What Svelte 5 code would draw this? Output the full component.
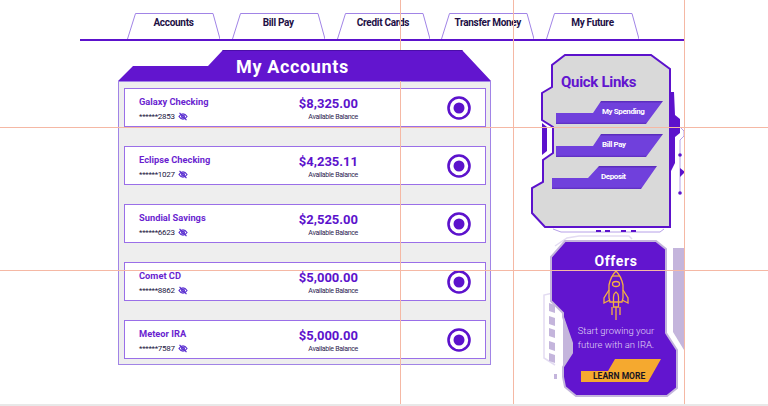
<script>
  const tabs = ['Accounts', 'Bill Pay', 'Credit Cards', 'Transfer Money', 'My Future'];
  const accounts = [
    { name: 'Galaxy Checking', mask: '******2853', amount: '$8,325.00' },
    { name: 'Eclipse Checking', mask: '******1027', amount: '$4,235.11' },
    { name: 'Sundial Savings', mask: '******6623', amount: '$2,525.00' },
    { name: 'Comet CD', mask: '******8862', amount: '$5,000.00' },
    { name: 'Meteor IRA', mask: '******7587', amount: '$5,000.00' }
  ];
  const links = ['My Spending', 'Bill Pay', 'Deposit'];
  const guidesX = [400, 513, 684];
  const guidesY = [127, 270];
</script>

<div class="page">
  <nav class="nav">
    {#each tabs as tab}
      <a class="tab" href="#top">
        <svg class="tab-shape" viewBox="0 0 93 26" aria-hidden="true">
          <path d="M.5 26 8.500.5h77.500L93 26" />
        </svg>
        <span>{tab}</span>
      </a>
    {/each}
  </nav>

  <div class="content">
    <section class="accounts">
      <h1 class="banner">My Accounts</h1>
      <ul class="list">
        {#each accounts as a}
          <li class="row">
            <div class="who">
              <div class="name">{a.name}</div>
              <div class="mask">
                {a.mask}
                <svg class="eye" viewBox="0 0 10 9" aria-hidden="true">
                  <path d="M1 4.500C2.200 2.600 3.500 1.800 5 1.800s2.800.8 4 2.700C7.800 6.400 6.500 7.200 5 7.200S2.200 6.400 1 4.500Z" />
                  <circle cx="5" cy="4.500" r="1.400" />
                  <path d="M1.500.8 8.500 8.200" />
                </svg>
              </div>
            </div>
            <div class="money">
              <div class="amount">{a.amount}</div>
              <div class="avail">Available Balance</div>
            </div>
            <svg class="radio" viewBox="0 0 24 24" aria-hidden="true">
              <circle class="ring" cx="12" cy="12" r="10.500" />
              <circle class="dot" cx="12" cy="12" r="5.500" />
            </svg>
          </li>
        {/each}
      </ul>
    </section>

    <aside class="side">
      <div class="quick">
        <svg class="card-art" viewBox="530 52 156 180" aria-hidden="true">
          <path class="thin" d="M680 127l4 4v5l-4 4v52" />
          <circle class="solid" cx="680" cy="155" r="1.800" />
          <circle class="solid" cx="680" cy="193" r="1.800" />
          <path class="solid" d="M680 168l5 4-5 5z" />
          <path class="solid" d="M670 92h4l1 23 5 4v14l-5 4v26l-4 8h-1z" />
          <path class="quick-body" d="M565 55h86l19 14v158H545l-13-14v-25l11-6v-22l10-7v-26l-11-7V93l10-6V65z" />
          <path class="solid" d="M542 123l5 4v24l-5 4z" />
          <path class="thin" d="M553 229l8 3h99l4-3" />
          <path class="solid" d="M596 230h5v2h-5zM605 230h5v2h-5zM621 230h5v2h-5zM631 230h5v2h-5z" />
        </svg>
        <h2 class="quick-title">Quick Links</h2>
        <div class="links">
          {#each links as link}
            <a class="link" href="#top">{link}</a>
          {/each}
        </div>
      </div>

      <div class="offers">
        <svg class="card-art" viewBox="530 232 156 173" aria-hidden="true">
          <path class="pale" d="M673 248h11v102l-11-18z" />
          <path class="faint" d="M553 293l-9 2v63l11 7" />
          <path class="faint" d="M555 246l12-8 12-2h50l3 3" />
          <path class="pale" d="M549 303l6 2v8l-6-2zM549 316l6 2v8l-6-2zM549 328l6 2v8l-6-2zM549 341l6 2v8l-6-2zM549 353l6 2v8l-6-2zM554 374h3v5h-3z" />
          <path class="offer-body" d="M565 241h91l10 8v84l11 17v38l-10 8h-91l-11-9-2-10v-10l9-14v-10l-9-26v-4l-12-12v-44z" />
          <path class="pale" d="M563 315l9 28v10l-9 14z" />
        </svg>
        <h2 class="offer-title">Offers</h2>
        <svg class="rocket" viewBox="600 268 32 54" aria-hidden="true">
          <path d="M616 271c4 4 6 9 7 14v13l-1 4h-12l-1-4v-13c1-5 3-10 7-14z" />
          <path d="M612 276h8" />
          <ellipse cx="616" cy="284" rx="3.500" ry="2.500" />
          <path d="M609 290l-5 8v5l6-3M623 290l5 8v5l-6-3" />
          <path d="M613.500 307v-10c0-2 1-4 2.500-5 1.500 1 2.500 3 2.500 5v10z" />
          <path d="M612 307v8M616 307v13M620 307v8" />
        </svg>
        <p class="offer-text">Start growing your<br />future with an IRA.</p>
        <a class="learn" href="#top">LEARN MORE</a>
      </div>
    </aside>
  </div>

  {#each guidesX as x}
    <i class="guide v" style="left:{x}px"></i>
  {/each}
  {#each guidesY as y}
    <i class="guide h" style="top:{y}px"></i>
  {/each}
</div>

<style>
  :global(body) {
    margin: 0;
    background: #fff;
  }
  .page {
    position: relative;
    width: 768px;
    height: 404px;
    border-bottom: 2px solid #e8e8e8;
    overflow: hidden;
    font-family: Roboto, "Liberation Sans", sans-serif;
    background: #fff;
  }
  .nav {
    display: flex;
    gap: 11.750px;
    width: 557px;
    margin-left: 80px;
    padding: 13px 0 0 47px;
    border-bottom: 2px solid #5c12cc;
  }
  .tab {
    position: relative;
    display: block;
    width: 93px;
    height: 26px;
    color: #1d0f45;
    font-size: 10px;
    font-weight: 700;
    letter-spacing: -.3px;
    line-height: 19px;
    text-align: center;
    text-decoration: none;
  }
  .tab span {
    position: relative;
  }
  .tab-shape {
    position: absolute;
    inset: 0;
    width: 93px;
    height: 26px;
    fill: #fff;
    stroke: #a184e6;
    stroke-width: 1;
  }
  .content {
    display: flex;
    align-items: flex-start;
    margin: 9px 0 0 118px;
  }
  .accounts {
    width: 373px;
  }
  .banner {
    position: relative;
    z-index: 2;
    box-sizing: border-box;
    height: 31px;
    margin: 0;
    padding-left: 118px;
    background: #6215cf;
    border-top: 1px solid #4a0ea8;
    color: #fff;
    font-size: 18px;
    font-weight: 700;
    letter-spacing: .65px;
    line-height: 32px;
    clip-path: polygon(0 31px, 15px 16px, 90px 16px, 105px 0, 344px 0, 373px 31px);
  }
  .list {
    display: flex;
    flex-direction: column;
    gap: 19px;
    box-sizing: border-box;
    height: 284px;
    margin: 0;
    padding: 6px 5px;
    list-style: none;
    background: #eeeeee;
    border: 1px solid #a184e6;
  }
  .row {
    display: flex;
    align-items: center;
    flex: none;
    box-sizing: border-box;
    height: 39px;
    width: 362px;
    padding-left: 14px;
    background: #fff;
    border: 1px solid #9a6fe8;
  }
  .who {
    width: 119px;
    margin-top: 3px;
  }
  .name {
    color: #6a1fd0;
    font-size: 9.300px;
    font-weight: 700;
    line-height: 12px;
    margin-bottom: 3px;
  }
  .mask {
    display: flex;
    align-items: center;
    gap: 3px;
    color: #22163f;
    font-size: 8px;
    letter-spacing: -.3px;
    line-height: 12px;
  }
  .eye {
    width: 10px;
    height: 9px;
    fill: none;
    stroke: #5a2fd0;
    stroke-width: 1.200;
  }
  .money {
    width: 100px;
    margin-top: 1px;
    text-align: right;
  }
  .amount {
    color: #5c12cc;
    font-size: 13px;
    font-weight: 700;
    line-height: 17px;
  }
  .avail {
    margin-top: 1px;
    color: #2c2350;
    font-size: 7px;
    letter-spacing: -.3px;
    line-height: 9px;
  }
  .radio {
    width: 24px;
    height: 24px;
    margin-left: 89px;
  }
  .ring {
    fill: none;
    stroke: #5c12cc;
    stroke-width: 2.600;
  }
  .dot {
    fill: #5c12cc;
  }
  .side {
    width: 156px;
    margin: 2px 0 0 39px;
  }
  .quick,
  .offers {
    position: relative;
    box-sizing: border-box;
  }
  .quick {
    height: 180px;
    padding: 22px 0 0 31px;
  }
  .offers {
    height: 173px;
    padding-top: 21px;
    text-align: center;
  }
  .card-art {
    position: absolute;
    top: 0;
    left: 0;
    width: 156px;
    height: 100%;
    overflow: visible;
  }
  .solid {
    fill: #5c12cc;
  }
  .thin {
    fill: none;
    stroke: #b6a0e8;
    stroke-width: 1;
  }
  .pale {
    fill: #c4b5dc;
  }
  .faint {
    fill: none;
    stroke: #e3dcf2;
    stroke-width: 1.500;
  }
  .quick-body {
    fill: #d9d9d9;
    stroke: #5c12cc;
    stroke-width: 2;
  }
  .offer-body {
    fill: #6215cf;
    stroke: #c4b5dc;
    stroke-width: 2;
  }
  .quick-title {
    position: relative;
    margin: 0;
    color: #6215cf;
    font-size: 15px;
    font-weight: 700;
    letter-spacing: -.3px;
    line-height: 16px;
  }
  .links {
    position: relative;
    display: flex;
    flex-direction: column;
    gap: 10px;
    margin: 11px 0 0 -5px;
  }
  .link {
    display: block;
    box-sizing: border-box;
    width: 107px;
    height: 23px;
    padding-left: 46px;
    background: linear-gradient(#5b2dbd 1px, #7040dc 2px, #7040dc 21px, #5b2dbd 23px);
    color: #fff;
    font-size: 8px;
    font-weight: 700;
    letter-spacing: -.4px;
    line-height: 21px;
    text-decoration: none;
    clip-path: polygon(0 12px, 37px 12px, 45px 0, 107px 0, 90px 23px, 0 23px);
  }
  .link:last-child {
    margin: -1px 0 0 -4px;
    width: 105px;
    padding-left: 49px;
    clip-path: polygon(0 12px, 36px 12px, 47px 0, 105px 0, 89px 23px, 0 23px);
  }
  .offer-title {
    position: relative;
    margin: 0 0 0 16px;
    color: #fff;
    font-size: 14px;
    font-weight: 700;
    letter-spacing: .6px;
    line-height: 16px;
  }
  .rocket {
    position: relative;
    display: block;
    width: 32px;
    height: 54px;
    margin: -1px 0 0 70px;
    fill: none;
    stroke: #f5b042;
    stroke-width: 1.300;
  }
  .offer-text {
    position: relative;
    margin: 2px 0 0 16px;
    color: #e0d6f5;
    font-size: 9.500px;
    font-weight: 300;
    line-height: 14px;
  }
  .learn {
    position: absolute;
    left: 51px;
    top: 127px;
    box-sizing: border-box;
    width: 80px;
    height: 23px;
    padding: 12px 0 0 12px;
    background: #f5a92f;
    color: #191423;
    font-size: 8.500px;
    font-weight: 700;
    line-height: 11px;
    text-align: left;
    text-decoration: none;
    clip-path: polygon(0 12px, 27px 12px, 34px 0, 80px 0, 67px 23px, 0 23px);
  }
  .guide {
    position: absolute;
    z-index: 1;
    background: #f5b8a4;
  }
  .v {
    top: 0;
    bottom: 0;
    width: 1px;
  }
  .h {
    left: 0;
    right: 0;
    height: 1px;
  }
</style>
